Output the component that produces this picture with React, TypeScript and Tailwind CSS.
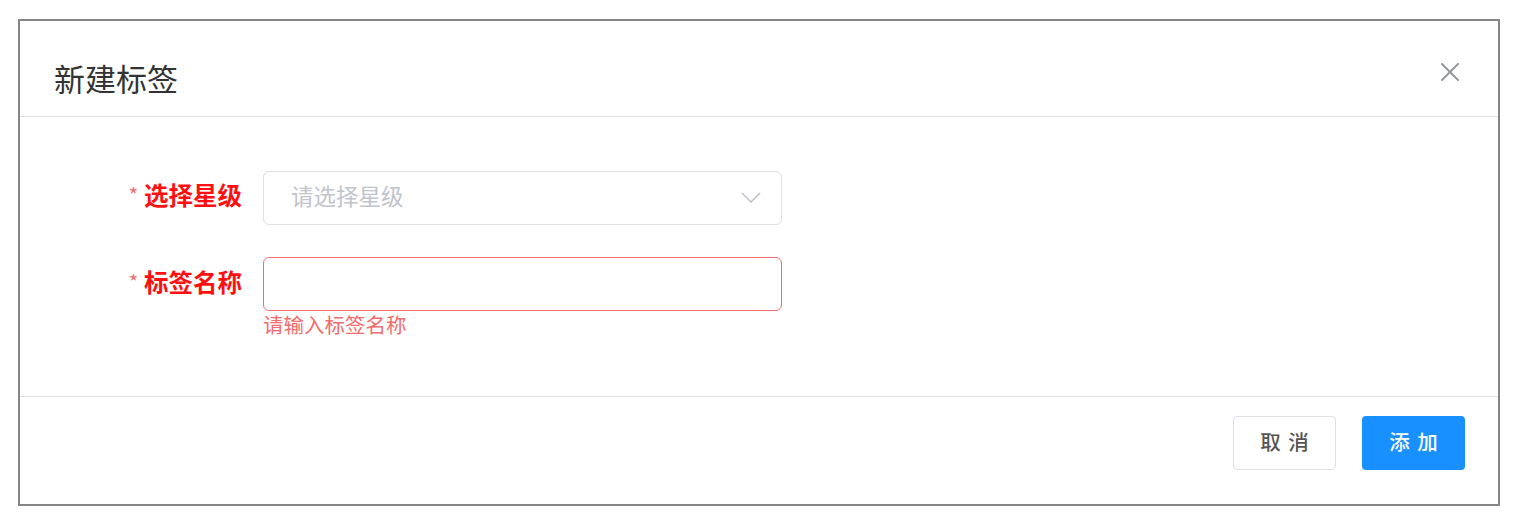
import React from "react";

const font = { fontFamily: '"Noto Sans CJK SC", "Noto Sans", sans-serif' };

export default function App() {
  return (
    <div className="w-[1522px] h-[520px] bg-white pt-[19px] pl-[18px]" style={font}>
      <div className="w-[1482px] h-[487px] border-2 border-[#858585] bg-white flex flex-col">
        {/* header */}
        <div className="h-[96px] shrink-0 border-b border-[#dcdfe6] pt-[18px] pl-[34px] pr-[39px] flex items-center justify-between">
          <div className="text-[31px] leading-[40px] text-[#333333]">新建标签</div>
          <svg className="mb-[11px]" width="18" height="18" viewBox="0 0 18 18" fill="none">
            <path d="M1 1L17 17M17 1L1 17" stroke="#909399" strokeWidth="1.8" strokeLinecap="round" />
          </svg>
        </div>
        {/* body */}
        <div className="pt-[54px] pb-[57px] border-b border-[#dcdfe6]">
          <div className="flex items-center h-[54px]">
            <div className="w-[243px] pr-[21px] text-right text-[24.5px] font-bold text-[#ff1010] leading-[34px] relative -top-[2px]">
              <span className="text-[#f56c6c] text-[20px] font-normal mr-[6px] relative -top-[2px]">*</span>
              选择星级
            </div>
            <div className="w-[519px] h-[54px] border border-[#dcdfe6] rounded-[6px] flex items-center justify-between pl-[27px] pr-[20px]">
              <span className="text-[22.5px] text-[#c0c4cc] relative -top-[2px]">请选择星级</span>
              <svg width="20" height="11" viewBox="0 0 20 11" fill="none" className="relative -top-[1px]">
                <path d="M1 1L10 10L19 1" stroke="#c0c4cc" strokeWidth="1.6" />
              </svg>
            </div>
          </div>
          <div className="flex items-center h-[54px] mt-[32px]">
            <div className="w-[243px] pr-[21px] text-right text-[24.5px] font-bold text-[#ff1010] leading-[34px] relative -top-[1px]">
              <span className="text-[#f56c6c] text-[20px] font-normal mr-[6px] relative -top-[2px]">*</span>
              标签名称
            </div>
            <div className="w-[519px] h-[54px] border-[1.5px] border-[#f56c6c] rounded-[6px]"></div>
          </div>
          <div className="pl-[243px] text-[20.5px] leading-[28px] text-[#f56c6c] relative -top-[1px]">请输入标签名称</div>
        </div>
        {/* footer */}
        <div className="flex-1 flex justify-end items-start pt-[19px] pr-[33px] gap-[26px]">
          <button className="w-[103px] h-[54px] border border-[#dcdfe6] rounded-[4px] bg-white text-[20.5px] font-medium text-[#555555] tracking-[0.36em] pl-[0.36em] pb-[3px]">
            取消
          </button>
          <button className="w-[103px] h-[54px] rounded-[4px] bg-[#1890ff] text-[20.5px] font-medium text-white tracking-[0.36em] pl-[0.36em] pb-[3px]">
            添加
          </button>
        </div>
      </div>
    </div>
  );
}
